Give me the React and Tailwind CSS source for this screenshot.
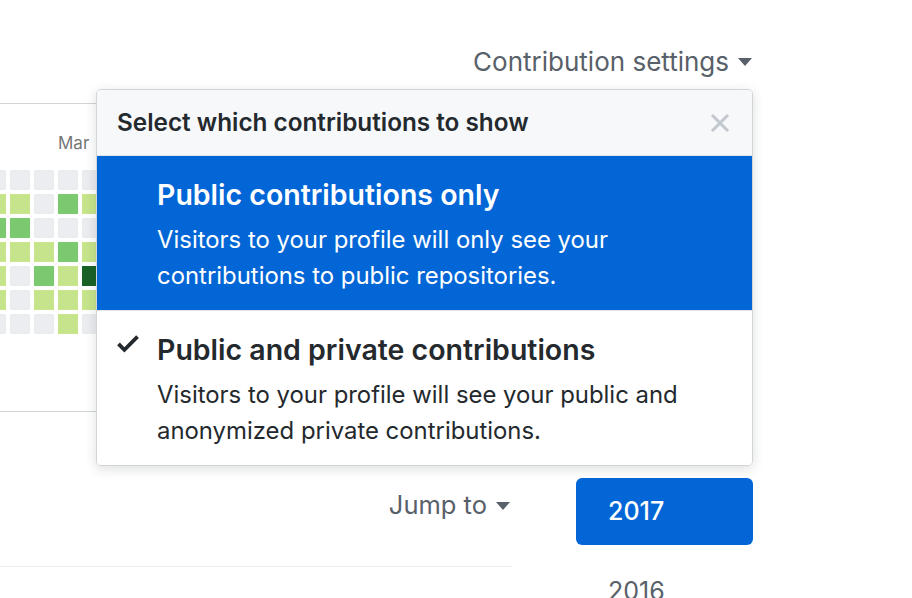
import React from 'react';

const L = 'bg-[#c6e48b]';
const M = 'bg-[#7bc96f]';
const D = 'bg-[#196127]';
const G = 'bg-[#ebedf0]';

// rows of the visible part of the calendar, five columns
const weeks = [
    [G, G, G, G, G],
    [L, L, G, M, L],
    [M, M, G, G, G],
    [L, L, L, M, L],
    [L, G, M, L, D],
    [L, G, L, L, L],
    [G, G, G, L, G],
];

const Caret = () => (
    <svg width="14" height="8" viewBox="0 0 14 8" className="ml-[9px] mt-[2px]">
        <path d="M0 0h14L7 8z" fill="#586069" />
    </svg>
);

const Check = () => (
    <svg width="22" height="29" viewBox="0 0 12 16" className="absolute left-[-40px] top-[-5px]">
        <path d="M12 5l-8 8-4-4 1.5-1.5L4 10l6.5-6.5L12 5z" fill="#24292e" />
    </svg>
);

const Option = ({ title, desc, active, checked }) => (
    <div className={`pl-[60px] pr-6 pt-[23px] pb-[16px] ${active ? 'bg-[#0366d6] text-white' : 'bg-white text-[#24292e]'}`}>
        <div className="relative">
            {checked && <Check />}
            <div className="text-[28.5px] leading-[32px] font-semibold">{title}</div>
            <div className="mt-[11px] text-[23.9px] leading-[36px]">
                {desc.map((line) => (
                    <div key={line}>{line}</div>
                ))}
            </div>
        </div>
    </div>
);

export default function App() {
    return (
        <div className="relative w-[912px] h-[598px] overflow-hidden bg-white font-['Inter',sans-serif] text-[#24292e]">
            <div className="mt-[45px] h-[32px] pr-[160px] flex justify-end items-center text-[26px] text-[#586069]">
                Contribution settings
                <Caret />
            </div>

            <div className="mt-[26px] ml-[-20px] w-[772px] h-[309px] border border-[#d1d5da] rounded-[6px] pl-[5px] pt-[29px]">
                <div className="pl-[72px] h-[20px] text-[17px] leading-[20px] text-[#767676]">Mar</div>
                <div className="mt-[17px] flex flex-col gap-[4px]">
                    {weeks.map((row, i) => (
                        <div key={i} className="flex gap-[4px]">
                            {row.map((c, j) => (
                                <div key={j} className={`w-[20px] h-[20px] ${c}`} />
                            ))}
                        </div>
                    ))}
                </div>
            </div>

            <div className="mt-[66px] flex">
                <div className="w-[512px] h-[89px] border-b border-[#eaecef] pt-[11px] pr-[2px] flex justify-end">
                    <div className="h-[32px] flex items-center text-[25.5px] text-[#586069]">
                        Jump to
                        <Caret />
                    </div>
                </div>
                <div className="ml-[64px] w-[177px]">
                    <div className="h-[67px] rounded-[6px] bg-[#0366d6] text-white text-[25px] font-medium pl-[32px] flex items-center">
                        2017
                    </div>
                    <div className="mt-[30px] pl-[32px] text-[25px] leading-[32px] text-[#586069]">2016</div>
                </div>
            </div>

            <div className="absolute left-[96px] top-[89px] w-[657px] h-[377px] overflow-hidden rounded-[5px] border border-[#d1d5da] bg-white shadow-[0_3px_12px_rgba(27,31,35,0.15)]">
                <div className="h-[66px] bg-[#f6f8fa] border-b border-[#e1e4e8] pl-[20px] pr-[22px] flex items-center justify-between">
                    <span className="text-[24.3px] font-semibold">Select which contributions to show</span>
                    <svg width="20" height="20" viewBox="0 0 20 20">
                        <path d="M2 2l16 16M18 2L2 18" stroke="#c3c8cf" strokeWidth="3" />
                    </svg>
                </div>
                <Option
                    active
                    title="Public contributions only"
                    desc={['Visitors to your profile will only see your', 'contributions to public repositories.']}
                />
                <div className="h-px bg-[#e1e4e8]" />
                <Option
                    checked
                    title="Public and private contributions"
                    desc={['Visitors to your profile will see your public and', 'anonymized private contributions.']}
                />
            </div>
        </div>
    );
}
